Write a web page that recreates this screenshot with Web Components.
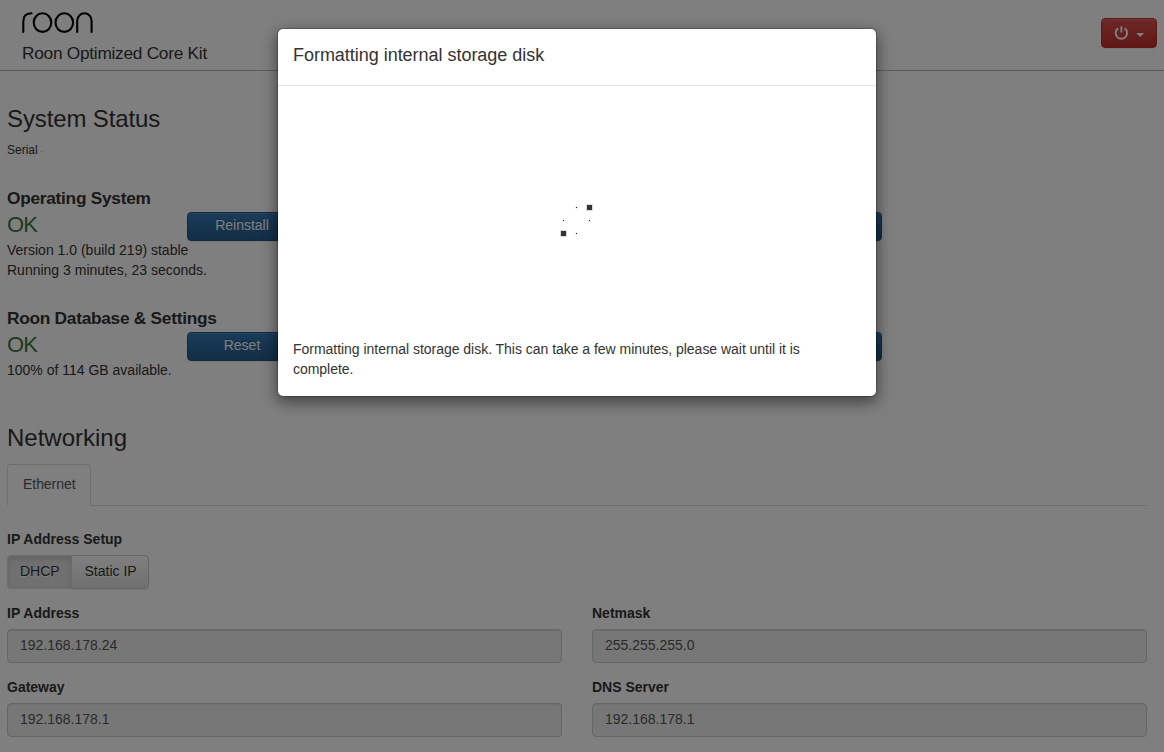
<!DOCTYPE html>
<html lang="en">
<head>
<meta charset="utf-8">
<title>Roon Optimized Core Kit</title>
<style>
html,body{margin:0;height:100%;overflow:hidden;background:#fff}
body{font:14px/20px "Liberation Sans",Arial,sans-serif;color:#333}
</style>
</head>
<body>
<rock-app></rock-app>
<script>
function define(name, html, setup) {
  customElements.define(name, class extends HTMLElement {
    connectedCallback() {
      if (this.shadowRoot) return;
      const t = document.createElement('template');
      t.innerHTML = html;
      this.attachShadow({mode: 'open'}).append(t.content.cloneNode(true));
      if (setup) setup(this, this.shadowRoot);
    }
  });
}

define('rock-logo', `<style>:host{display:block;height:24px}svg{display:block}</style>
<svg width="74" height="24" viewBox="0 0 74 24" fill="none" stroke="#000" stroke-width="2.1" stroke-linecap="round">
<path d="M1.3 20.9V10.5Q1.3 2.3 9.6 2.3"/><ellipse cx="20.5" cy="11.6" rx="8.8" ry="9.3"/><ellipse cx="42.3" cy="11.6" rx="8.8" ry="9.3"/>
<path d="M55.2 20.9V9.7A7.2 7.4 0 0 1 69.6 9.7V20.9"/></svg>`);

define('rock-power', `<style>
:host{display:flex;box-sizing:border-box;width:56px;height:30px;border:1px solid #b92c28;border-radius:4px;background:linear-gradient(#d9534f,#c12e2a);box-shadow:inset 0 1px 0 rgba(255,255,255,.15),0 1px 1px rgba(0,0,0,.075)}
svg{display:block}</style>
<svg width="54" height="28" viewBox="0 0 54 28"><path d="M16.2 9.3a5.7 5.7 0 1 0 6.4 0M19.4 7.2v6.2" fill="none" stroke="#fff" stroke-width="1.9"/><path d="M34.2 14h8l-4 4z" fill="#fff"/></svg>`);

define('rock-header', `<style>
:host{display:flex;box-sizing:border-box;height:71px;border-bottom:1px solid #bbb;padding:11px 7px 0 22px;justify-content:space-between}
.t{font-size:17.3px;letter-spacing:-.27px;line-height:20px;margin-top:8px}
rock-power{margin-top:7px}</style>
<div><rock-logo></rock-logo><div class="t"><slot></slot></div></div><rock-power></rock-power>`);

define('rock-button', `<style>
:host{display:block;box-sizing:border-box;width:110px;height:29px;border:1px solid #245580;border-radius:4px;color:#fff;text-align:center;line-height:20px;padding-top:2px;background:linear-gradient(#337ab7,#265a88);text-shadow:0 -1px 0 rgba(0,0,0,.2);box-shadow:inset 0 1px 0 rgba(255,255,255,.15),0 1px 1px rgba(0,0,0,.075)}
</style><slot></slot>`);

define('rock-status', `<style>
:host{display:block;height:120px}
h4{margin:0;font-size:17.3px;letter-spacing:-.27px;line-height:20px;white-space:nowrap}
.row{display:grid;grid-template-columns:180px 110px 1fr 110px;width:875px;height:32px}
.ok{font-size:22px;line-height:33px;letter-spacing:-.9px;color:#3c763d}
rock-button{margin-top:4px}
.last{grid-column:4}
</style><h4></h4><div class="row"><div class="ok">OK</div><rock-button class="a"></rock-button><rock-button class="last"></rock-button></div><div><slot></slot></div>`,
(host, root) => {
  root.querySelector('h4').textContent = host.getAttribute('heading');
  root.querySelector('.a').textContent = host.getAttribute('action');
});

define('rock-tabs', `<style>
:host{display:flex;height:41px;border-bottom:1px solid #ddd}
span{box-sizing:border-box;width:84px;height:42px;border:1px solid #ddd;border-bottom-color:#fff;border-radius:4px 4px 0 0;padding:9px 0 9px 15px;background:#fff;color:#555;letter-spacing:-.05px}
</style><span><slot></slot></span>`);

define('rock-toggle', `<style>
:host{display:flex;width:142px;height:34px}
span{box-sizing:border-box;height:34px;border:1px solid #ccc;padding:5px 0 5px 12px;text-shadow:0 1px 0 #fff}
.on{width:65px;background:#e0e0e0;border-color:#dbdbdb;border-radius:4px 0 0 4px;box-shadow:inset 0 3px 5px rgba(0,0,0,.125);position:relative}
.off{width:78px;margin-left:-1px;padding-left:12.5px;border-radius:0 4px 4px 0;background:linear-gradient(#fff,#e0e0e0);box-shadow:inset 0 1px 0 rgba(255,255,255,.15),0 1px 1px rgba(0,0,0,.075)}
</style><span class="on">DHCP</span><span class="off">Static IP</span>`);

define('rock-field', `<style>
:host{display:block;height:74px}
b{display:block;height:26px}
div{box-sizing:border-box;height:34px;border:1px solid #ccc;border-radius:4px;background:#eee;color:#555;padding:5px 12px;box-shadow:inset 0 1px 1px rgba(0,0,0,.075)}
</style><b></b><div><slot></slot></div>`,
(host, root) => { root.querySelector('b').textContent = host.getAttribute('label'); });

define('rock-spinner', `<style>
:host{display:grid;grid-template-columns:repeat(3,13px);grid-auto-rows:13px;width:39px;margin-right:1px;place-items:center}
i{width:1px;height:1px;background:#222;box-shadow:0 0 0 1px rgba(0,0,0,.06)}
.big{width:5px;height:5px;background:#333;box-shadow:0 0 0 1px rgba(0,0,0,.14)}
.gap{visibility:hidden}
</style><i class="gap"></i><i></i><i class="big"></i><i></i><i class="gap"></i><i></i><i class="big"></i><i></i>`);

define('rock-dialog', `<style>
:host{position:absolute;inset:0;background:rgba(0,0,0,.5);display:flex;justify-content:center;align-items:flex-start;padding-right:10px}
section{box-sizing:border-box;width:600px;height:369px;margin-top:28px;background:#fff;background-clip:padding-box;border:1px solid rgba(0,0,0,.2);border-radius:6px;box-shadow:0 5px 15px rgba(0,0,0,.5)}
header{box-sizing:border-box;height:57px;border-bottom:1px solid #e5e5e5;padding:16px 15px;font-size:18px;line-height:20px;letter-spacing:-.03px}
.spin{box-sizing:border-box;height:253px;padding-top:115px;display:flex;justify-content:center}
p{margin:0;padding:0 15px;letter-spacing:-.03px}
</style><section><header></header><div class="spin"><rock-spinner></rock-spinner></div><p><slot></slot></p></section>`,
(host, root) => { root.querySelector('header').textContent = host.getAttribute('heading'); });

define('rock-app', `<style>
:host{display:block;position:relative;height:752px;overflow:hidden}
main{padding:35px 17px 0 7px}
h3{margin:0;font-size:24px;line-height:26px;font-weight:400}
.sys{letter-spacing:-.12px}
.serial{font-size:12px;margin:8px 0 28px;display:flex;align-items:center;gap:3px}
.serial i{width:1px;height:1px;background:#aaa;margin-top:3px}
.net{margin:-3px 0 13px}
.label{display:block;margin:23px 0 6px}
.grid{display:grid;grid-template-columns:1fr 1fr;column-gap:30px;margin-top:14px}
</style>
<rock-header>Roon Optimized Core Kit</rock-header>
<main>
<h3 class="sys">System Status</h3>
<div class="serial">Serial <i></i></div>
<rock-status heading="Operating System" action="Reinstall">Version 1.0 (build 219) stable<br>Running 3 minutes, 23 seconds.</rock-status>
<rock-status heading="Roon Database &amp; Settings" action="Reset">100% of 114 GB available.</rock-status>
<h3 class="net">Networking</h3>
<rock-tabs>Ethernet</rock-tabs>
<b class="label">IP Address Setup</b>
<rock-toggle></rock-toggle>
<div class="grid">
<rock-field label="IP Address">192.168.178.24</rock-field><rock-field label="Netmask">255.255.255.0</rock-field>
<rock-field label="Gateway">192.168.178.1</rock-field><rock-field label="DNS Server">192.168.178.1</rock-field>
</div>
</main>
<rock-dialog heading="Formatting internal storage disk">Formatting internal storage disk. This can take a few minutes, please wait until it is complete.</rock-dialog>`);
</script>
</body>
</html>
